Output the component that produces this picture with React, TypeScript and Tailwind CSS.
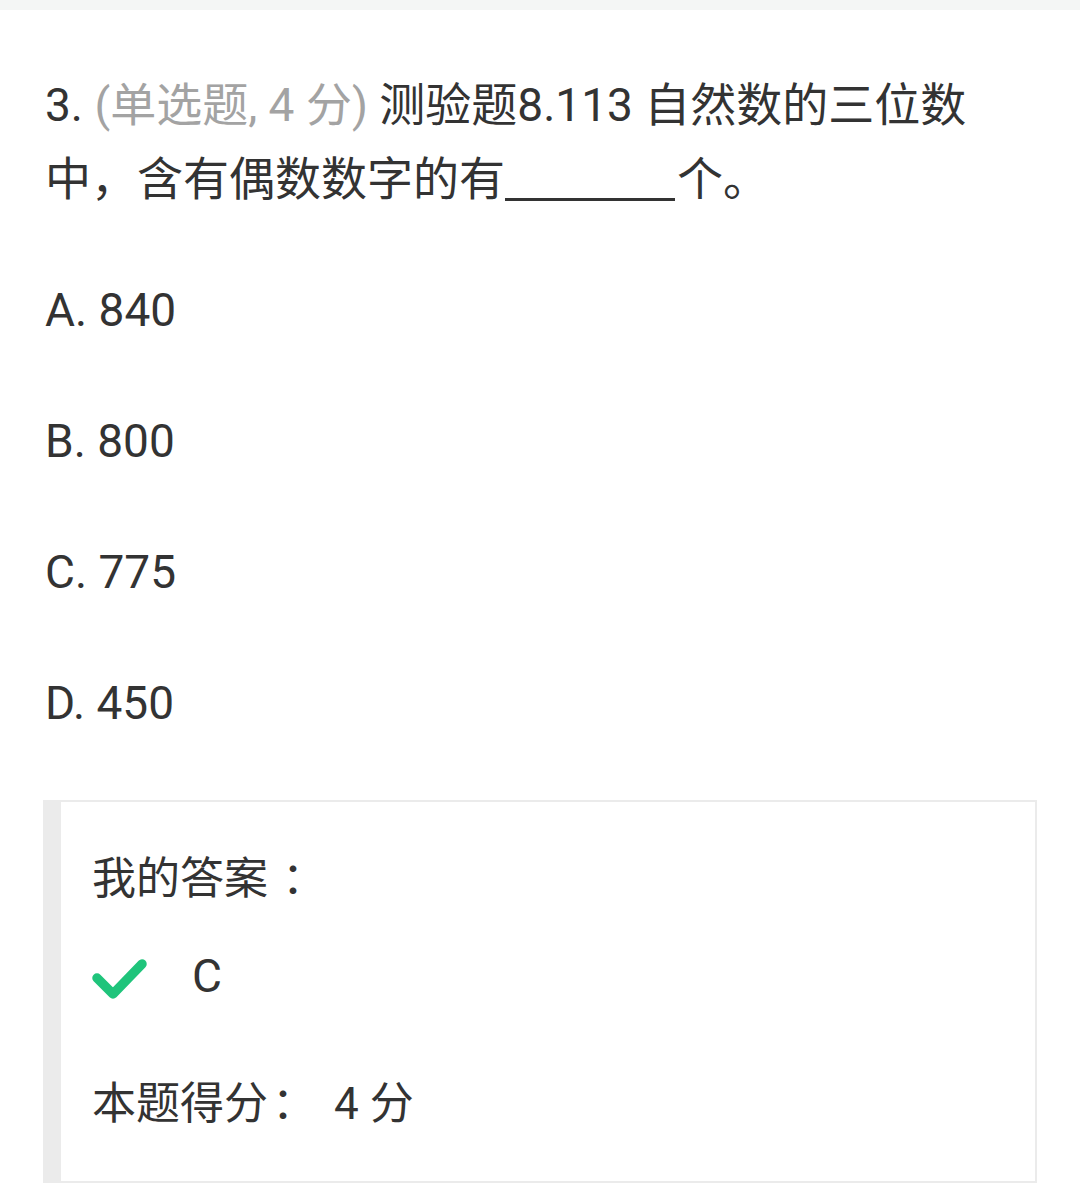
import React from 'react';

const options = ['A. 840', 'B. 800', 'C. 775', 'D. 450'];

const CheckIcon: React.FC = () => (
  <svg width="56" height="46" viewBox="0 0 56 46" className="mt-[6px] shrink-0">
    <polyline
      points="5,22 21,38 50,8"
      fill="none"
      stroke="#1fc47b"
      strokeWidth="9.5"
      strokeLinecap="round"
      strokeLinejoin="round"
    />
  </svg>
);

const App: React.FC = () => {
  return (
    <div
      className="min-h-[1204px] w-[1080px] bg-white text-[#333333]"
      style={{ fontFamily: 'Roboto, "Noto Sans CJK SC", sans-serif' }}
    >
      <div className="h-[10px] bg-[#f4f6f5]" />

      <div className="px-[45px] pt-[58px]">
        <div className="text-[46px] leading-[74px]">
          <span>3. </span>
          <span className="text-[#a3a3a3]">(单选题, 4 分)</span>
          <span> 测验题8.113 自然数的三位数</span>
          <br />
          <span>中，含有偶数数字的有</span>
          <span className="mr-[2px] inline-block h-[40px] w-[170px] border-b-[3px] border-[#333333] align-[-6px]" />
          <span>个。</span>
        </div>

        <div className="mt-[5px]">
          {options.map((o) => (
            <div key={o} className="mt-[57px] text-[46px] leading-[74px]">
              {o}
            </div>
          ))}
        </div>
      </div>

      <div className="mx-[43px] mt-[60px] flex border-y-2 border-r-2 border-[#ebebeb]">
        <div className="w-[18px] shrink-0 bg-[#ebebeb]" />
        <div className="flex-1 pb-[47px] pl-[31px] pt-[47px] text-[44px]">
          <div className="h-[60px] leading-[60px]">
            我的答案<span className="inline-block pl-[14px]">：</span>
          </div>
          <div className="mt-[37px] flex h-[60px] items-center">
            <CheckIcon />
            <span className="ml-[44px] text-[46px] leading-[60px]">C</span>
          </div>
          <div className="mt-[68px] h-[60px] leading-[60px]">
            本题得分<span className="inline-block pl-[4px]">：</span>
            <span className="ml-[18px]">4 分</span>
          </div>
        </div>
      </div>
    </div>
  );
};

export default App;
